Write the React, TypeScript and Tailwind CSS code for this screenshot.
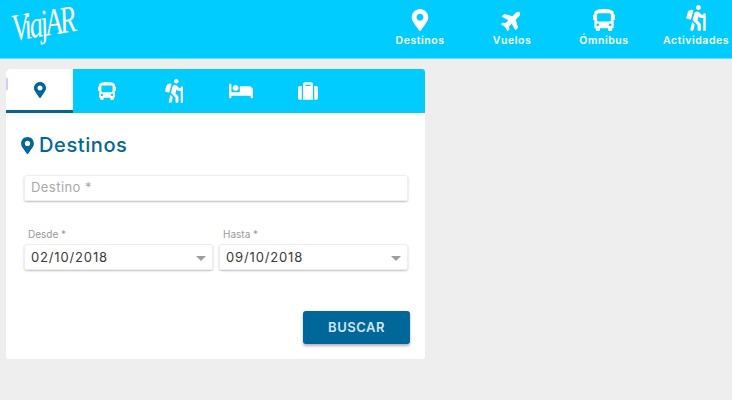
import React from "react";
import { FaBed, FaBus, FaHiking, FaMapMarkerAlt, FaPlane, FaSuitcase } from "react-icons/fa";

const navItems = [
  { label: "Destinos", icon: <FaMapMarkerAlt className="text-[22px]" /> },
  { label: "Vuelos", icon: <FaPlane className="text-[22px] -rotate-45" /> },
  { label: "Ómnibus", icon: <FaBus className="text-[22px]" /> },
  { label: "Actividades", icon: <FaHiking className="text-[26px]" /> },
];

const tabs = [
  { key: "destinos", icon: <FaMapMarkerAlt className="text-[16px]" /> },
  { key: "omnibus", icon: <FaBus className="text-[18px]" /> },
  { key: "actividades", icon: <FaHiking className="text-[24px]" /> },
  { key: "hotel", icon: <FaBed className="text-[24px]" /> },
  { key: "equipaje", icon: <FaSuitcase className="text-[20px]" /> },
];

const DateSelect = ({ label, value }: { label: string; value: string }) => (
  <div className="flex-1">
    <div className="h-[17px] pl-[4px] text-[10px] leading-[14px] text-[#9a9a9a]">{label}</div>
    <div className="h-[26px] flex items-center justify-between pl-[6px] pr-[6px] rounded-[3px] border border-[#eeeeee] shadow-[0_1px_2px_rgba(0,0,0,0.25)]">
      <span className="pt-[1px] text-[13px] tracking-[0.85px] text-[#3a3a3a]">{value}</span>
      <span className="border-x-[5px] border-t-[5px] border-x-transparent border-t-[#9e9e9e] mt-[2px]" />
    </div>
  </div>
);

const App: React.FC = () => {
  return (
    <div className="w-[732px] h-[400px] overflow-hidden bg-[#eeeeee] font-['Inter','Liberation_Sans',sans-serif]">
      <header className="h-[59px] bg-[#00ccff] border-b border-[#66e0ff] flex items-start text-white">
        <div className="ml-[12px] mt-[14px] shrink-0 whitespace-nowrap origin-left text-[38px] leading-[28px] italic tracking-[-3px] -rotate-[9deg] scale-x-[0.7] font-['Liberation_Serif',serif]">
          ViajAR
        </div>
        <nav className="ml-auto pr-[2px] flex gap-[24px]">
          {navItems.map((item) => (
            <div key={item.label} className="w-[68px] flex flex-col items-center">
              <div className="h-[34px] flex items-end pb-[3px]">{item.icon}</div>
              <span className="text-[10.5px] leading-[13px] font-semibold tracking-[0.55px] whitespace-nowrap">{item.label}</span>
            </div>
          ))}
        </nav>
      </header>

      <div className="relative mt-[10px] ml-[6px] w-[419px] h-[290px] bg-white rounded-[3px] overflow-hidden">
        <div className="absolute left-0 top-[9px] w-[2px] h-[12px] bg-[#d8c8ff]" />
        <div className="flex h-[44px] bg-[#00ccff]">
          {tabs.map((tab, i) => (
            <div
              key={tab.key}
              className={
                i === 0
                  ? "w-[67px] flex items-center justify-center bg-white text-[#00679b] border-b-[3px] border-[#00679b]"
                  : "w-[67px] flex items-center justify-center text-white"
              }
            >
              {tab.icon}
            </div>
          ))}
        </div>

        <div className="pt-[19px] pl-[13px] flex items-center gap-[3px] text-[#00679b]">
          <FaMapMarkerAlt className="text-[17px]" />
          <h1 className="text-[20px] leading-[26px] font-medium tracking-[0.6px]">Destinos</h1>
        </div>

        <div className="pt-[17px] pl-[18px] pr-[17px]">
          <div className="h-[26px] flex items-center pl-[6px] rounded-[3px] border border-[#eeeeee] shadow-[0_1px_2px_rgba(0,0,0,0.25)] text-[13px] tracking-[0.45px] text-[#a8a8a8]">
            Destino *
          </div>
          <div className="mt-[26px] flex gap-[6px]">
            <DateSelect label="Desde *" value="02/10/2018" />
            <DateSelect label="Hasta *" value="09/10/2018" />
          </div>
        </div>

        <div className="mt-[41px] pr-[15px] flex justify-end">
          <button className="w-[107px] h-[33px] rounded-[3px] bg-[#00679b] text-[#cfe6f2] text-[13px] font-semibold tracking-[0.5px] shadow-[0_2px_3px_rgba(0,0,0,0.3)]">
            BUSCAR
          </button>
        </div>
      </div>
    </div>
  );
};

export default App;
